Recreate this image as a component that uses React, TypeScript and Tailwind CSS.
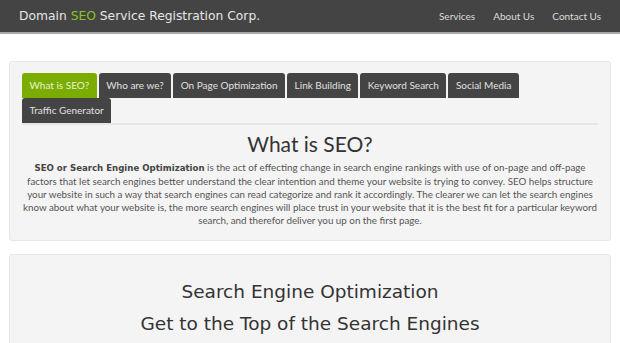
const tabs = [
  "What is SEO?",
  "Who are we?",
  "On Page Optimization",
  "Link Building",
  "Keyword Search",
  "Social Media",
  "Traffic Generator",
];

const navLinks = ["Services", "About Us", "Contact Us"];

export default function App() {
  return (
    <div className="min-h-[343px] bg-white font-['Lato',sans-serif]">
      <header className="flex h-[34px] items-center justify-between border-b-2 border-[#a8a8a8] bg-[#444444] pl-[19px] pr-[19px]">
        <div className="font-['DejaVu_Sans',sans-serif] text-[12.3px] text-[#e6e6e6]">
          Domain <span className="text-[#8cc11f]">SEO</span> Service Registration Corp.
        </div>
        <nav className="flex gap-[18px] text-[10px] text-[#dcdcdc]">
          {navLinks.map((l) => (
            <a key={l} href="#">{l}</a>
          ))}
        </nav>
      </header>

      <main className="flex flex-col gap-[13px] px-[9px] pt-[27px]">
        <section className="rounded-[3px] border border-[#e6e6e6] bg-[#f4f4f4] px-[12px] pb-[13px] pt-[11px]">
          <ul className="flex flex-wrap gap-x-[2px] border-b-2 border-[#e6e6e6]">
            {tabs.map((t, i) => (
              <li
                key={t}
                className={`flex h-[25px] items-center rounded-t-[3px] px-[7.5px] text-[10px] ${
                  i === 0 ? "bg-[#7aad00] text-[#e8f3cf]" : "bg-[#444444] text-[#e0e0e0]"
                }`}
              >
                {t}
              </li>
            ))}
          </ul>
          <h1 className="mt-[6px] text-center text-[21px] leading-[26px] text-[#333]">What is SEO?</h1>
          <p className="-mx-[2px] mt-[4px] text-center text-[9.8px] leading-[13px] text-[#555]">
            <strong className="font-['DejaVu_Sans',sans-serif] text-[8.6px] text-[#444]">SEO or Search Engine Optimization</strong> is
            the act of effecting change in search engine rankings with use of on-page and off-page factors that let
            search engines better understand the clear intention and theme your website is trying to convey. SEO helps
            structure your website in such a way that search engines can read categorize and rank it accordingly. The
            clearer we can let the search engines know about what your website is, the more search engines will place
            trust in your website that it is the best fit for a particular keyword search, and therefor deliver you up on
            the first page.
          </p>
        </section>

        <section className="h-[120px] rounded-[3px] border border-[#e6e6e6] bg-[#f4f4f4] pt-[21px] text-center font-['DejaVu_Sans',sans-serif] text-[#333]">
          <h2 className="text-[18.5px] leading-[32px]">Search Engine Optimization</h2>
          <h3 className="text-[18.5px] leading-[32px]">Get to the Top of the Search Engines</h3>
        </section>
      </main>
    </div>
  );
}
